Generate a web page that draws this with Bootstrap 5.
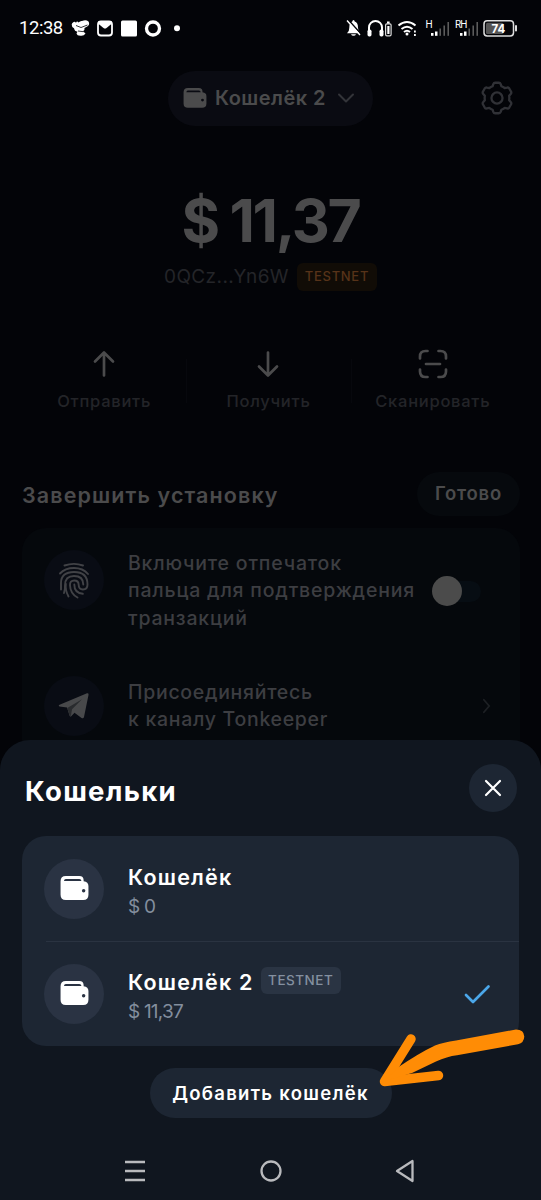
<!DOCTYPE html>
<html lang="ru">
<head>
<meta charset="utf-8">
<meta name="viewport" content="width=device-width, initial-scale=1">
<title>Кошельки</title>
<link href="https://cdn.jsdelivr.net/npm/bootstrap@5.3.0/dist/css/bootstrap.min.css" rel="stylesheet">
<style>
  body { background:#030408; font-family:Inter,"Open Sans",sans-serif; color:#fff; }
  .phone { width:541px; height:1200px; }
  .phone svg { display:block; flex-shrink:0; }
  .statusbar { height:56px; padding:0 23px 0 19px; }
  .clock { font:400 18.5px/56px Roboto,sans-serif; width:46px; letter-spacing:-.45px; }

  .dimmed { color:#4b4b4c; }
  .topbar { height:56px; margin-top:14px; padding:0 26px 0 168px; }
  .wallet-pill { width:205px; height:55px; padding:0 18px 0 15px; background:#0a0b12; font-weight:600; font-size:20px; letter-spacing:.46px; }
  .balance { height:70px; margin-top:60px; font-weight:700; font-size:59px; line-height:70px; white-space:nowrap; }
  .balance .sign { width:48px; font-size:59px; }
  .balance .sum { letter-spacing:-2.3px; }
  .address { height:28px; margin-top:7px; font-size:19px; letter-spacing:.4px; color:#242529; }
  .tag { border-radius:6px; font-weight:500; display:flex; align-items:center; justify-content:center; }
  .tag-dim { width:80px; height:28px; background:#110c06; color:#573319; font-size:13px; letter-spacing:.7px; }
  .actions { height:92px; margin:44px 26px 0 22px; font-size:16.5px; font-weight:500; letter-spacing:.74px; color:#232428; }
  .actions .act { padding-top:14px; gap:11px; line-height:22px; }
  .actions .act + .act::before { content:""; position:absolute; left:0; top:24px; height:44px; border-left:1px solid #07080d; }

  .setup-head { height:44px; margin:45px 21px 0 22px; }
  .setup-head h2 { font-size:21.5px; font-weight:600; letter-spacing:1.1px; margin:3px 0 0; }
  .done { width:103px; height:44px; background:#06090d; font-weight:600; font-size:18.5px; letter-spacing:.75px; }
  .setup { height:240px; margin:12px 21px 0 22px; padding:22px 29px 0 22px; background:#05080c; border-radius:24px; }
  .setup p { font-size:19.5px; line-height:27.4px; font-weight:500; margin:0; white-space:nowrap; color:#3d3e42; }
  .setup .step + .step { margin-top:44px; }
  .round { width:60px; height:60px; border-radius:50%; flex-shrink:0; display:flex; align-items:center; justify-content:center; }
  .setup .round { background:#090c14; }
  .switcher { width:49px; height:30px; margin-right:10px; }
  .switcher span { width:35px; height:21px; border-radius:11px; background:#070d13; margin-left:14px; }
  .switcher i { width:30px; height:30px; border-radius:50%; background:#4b4b4b; left:0; top:0; }

  .sheet { height:460px; background:#10161f; border-radius:30px 30px 0 0; padding:0 22px; }
  .sheet-head { height:96px; padding:0 2px 0 3px; }
  .sheet-head h1 { font-size:27.5px; font-weight:700; letter-spacing:1.3px; margin:6px 0 0; }
  .close-round { width:48px; height:48px; background:#1d2633; border:0; }
  .wallets { background:#1d2633; border-radius:24px; height:210px; }
  .wallets .wallet { height:105px; padding:0 28px 0 22px; gap:24px; }
  .wallets .wallet + .wallet::before { content:""; position:absolute; left:24px; right:0; top:0; border-top:1px solid #2a3341; }
  .wallets .round { background:#2a3343; }
  .wname { font-weight:600; font-size:21.5px; line-height:28px; letter-spacing:1.2px; white-space:nowrap; margin-top:5px; }
  .wsum { font-size:19px; line-height:26px; color:#838e9e; margin-top:3px; letter-spacing:-.8px; }
  .tag-grey { width:80px; height:27px; background:#2a3443; color:#8490a0; font-size:13.5px; letter-spacing:.5px; margin:-3px 0 0 7px; }
  .add { width:242px; height:50px; margin-top:22px; background:#1d2633; color:#fff; font-weight:600; font-size:18.5px; letter-spacing:1.3px; white-space:nowrap; border:0; padding:2px 0 0; }
  .navbar-keys { height:54px; margin-top:24px; padding:4px 104px 0 102px; }
  .pointer-arrow { left:370px; top:1020px; pointer-events:none; }
</style>
</head>
<body>
<svg width="0" height="0" class="position-absolute">
  <symbol id="wallet" viewBox="0 0 30 26">
    <path d="M6 0H20Q24.500 0 24.500 4.500V5.500Q29.500 6 29.500 10.500V19.500Q29.500 25 24 25H6Q.5 25 .5 19.500V5.500Q.5 0 6 0Z" fill="currentColor"/>
    <path d="M4 5.300Q4.200 3.200 6 3.200H20Q22 3.200 22.200 5.300Z" fill="var(--hole)"/>
    <circle cx="24.500" cy="15.300" r="1.800" fill="var(--hole)"/>
  </symbol>
</svg>
<div class="phone position-relative overflow-hidden d-flex flex-column">

  <header class="statusbar d-flex align-items-center">
    <span class="clock">12:38</span>
    <svg class="ms-1" width="124" height="24" viewBox="69 15 124 24" fill="#fff">
      <path d="M73 21.500q1.500-1.500 3 .3 1-2.500 2.500-.3 2-2 3.500-1.500 4-1.500 6.500.5 1.500 2.500-.5 4.500l-3.500 2q.5 2.500-1.500 3.300l2.500 2.200q-1.500 2.500-4.500 2.300-4 .2-4.500-2.500l1-1.500q-3-.5-3.500-3.500-2.500-1.500-2.300-3.800.3-1.500 1.300-2Z"/>
      <path d="M76 24.500l5 2 6.500-2.500M78 30l5.500.7" stroke="#030408" fill="none" stroke-width=".8"/>
      <rect x="98" y="20.500" width="14" height="14" rx="3" fill="none" stroke="#fff" stroke-width="1.800"/><path d="M98 20.500h14v2l-5.500 4.500q-1.500 1-3 0l-5.500-4.500Z"/>
      <rect x="121" y="19.500" width="16" height="16" rx="1.500"/>
      <circle cx="153" cy="27.500" r="6.500" fill="none" stroke="#fff" stroke-width="3.300"/>
      <circle cx="177" cy="27.200" r="3"/>
    </svg>
    <svg class="ms-auto" width="174" height="26" viewBox="344 14 174 26" fill="#fff">
      <path d="M347 32.200q2.300-1.500 2.300-5.500 0-5 3-6.100.2-1.500 1.200-1.500t1.200 1.500q3.300 1.100 3.300 6.100 0 4 2.300 5.500ZM351 33.200h5q-.6 1.600-2.500 1.600t-2.500-1.600Z"/>
      <path d="M348 18.500l13 14.500" stroke="#030408" stroke-width="1.600"/><path d="M347 19.500l13 14.500" stroke="#fff" stroke-width="1.400"/>
      <path d="M369 31v-4.500a6.500 6.500 0 0 1 13 0V31" fill="none" stroke="#fff" stroke-width="2"/><rect x="367.500" y="28.500" width="4" height="7" rx="1.700"/><rect x="379.500" y="28.500" width="4" height="7" rx="1.700"/>
      <rect x="385.600" y="22.800" width="5.500" height="12" rx="1.300" fill="none" stroke="#ddd" stroke-width="1.200"/><rect x="387.300" y="25" width="2.200" height="8"/><rect x="387" y="20.500" width="2.600" height="2"/>
      <g fill="none" stroke="#fff" stroke-width="2"><path d="M398.500 24.500q8.500-7 17 0"/><path d="M401.500 28q5.500-4.500 11 0"/><path d="M404 31q3-2.500 6 0"/></g><circle cx="407" cy="33" r="1.500"/><rect x="414" y="29.500" width="1.800" height="2"/><rect x="414" y="33" width="1.800" height="2"/>
      <g font-family="Roboto,sans-serif" font-size="10"><text x="425.500" y="27">H</text><text x="455" y="27" textLength="12.500">RH</text></g>
      <rect x="431" y="32" width="2.500" height="2.800"/><rect x="435" y="30.500" width="2.500" height="4.300"/><g fill="#666"><rect x="439.500" y="27.500" width="1.400" height="7.300"/><rect x="443.500" y="24.500" width="1.400" height="10.300"/><rect x="447.500" y="21" width="1.400" height="13.800"/></g>
      <rect x="460" y="32" width="2.500" height="2.800"/><rect x="464" y="30.500" width="2.500" height="4.300"/><g fill="#666"><rect x="468.500" y="27.500" width="1.400" height="7.300"/><rect x="472.500" y="24.500" width="1.400" height="10.300"/><rect x="476.500" y="21" width="1.400" height="13.800"/></g>
      <rect x="484" y="19.700" width="29.500" height="15.300" rx="3.200" fill="none" stroke="#ddd" stroke-width="1.500"/><rect x="486" y="21.700" width="17.500" height="11.300" rx="1.500" fill="#555"/><rect x="515" y="24" width="2" height="6.500" rx="1" fill="#ddd"/>
      <text x="498.500" y="31.600" text-anchor="middle" font-family="Inter,sans-serif" font-size="11.500" font-weight="700">74</text>
    </svg>
  </header>

  <main class="dimmed">
    <div class="topbar d-flex align-items-center justify-content-between">
      <div class="wallet-pill rounded-pill d-flex align-items-center">
        <svg width="24" height="20.500" style="--hole:#0a0b12"><use href="#wallet"/></svg>
        <span class="ms-2 text-nowrap">Кошелёк 2</span>
        <svg class="ms-auto" width="18" height="12" viewBox="0 0 18 12" fill="none" stroke="#333439" stroke-width="2" stroke-linecap="round" stroke-linejoin="round"><path d="M2 2.500l7 7 7-7"/></svg>
      </div>
      <svg width="36" height="36" viewBox="-19.500 -19 39 38" fill="none" stroke="#303136" stroke-width="2.500" stroke-linejoin="round">
        <path d="M-2-16.500h4q1.500 0 2 1.500l.8 2.300q1.800.7 3.500 1.900l2.500-.5q1.600-.4 2.500 1l1.800 3.200q.9 1.500-.2 2.700l-1.700 2q.3 2.400 0 4.800l1.700 2q1.100 1.200.2 2.700l-1.800 3.200q-.9 1.400-2.500 1l-2.500-.5q-1.700 1.200-3.500 1.900L4 15q-.5 1.500-2 1.500h-4q-1.500 0-2-1.500l-.8-2.300q-1.800-.7-3.500-1.900l-2.500.5q-1.600.4-2.500-1l-1.800-3.200q-.9-1.500.2-2.700l1.700-2q-.3-2.400 0-4.800l-1.700-2q-1.100-1.200-.2-2.700l1.800-3.200q.9-1.400 2.500-1l2.500.5q1.700-1.200 3.500-1.900L-4-15q.5-1.500 2-1.500Z"/><circle r="6"/>
      </svg>
    </div>

    <div class="balance d-flex justify-content-center"><span class="sign">$</span><span class="sum">11,37</span></div>
    <div class="address d-flex align-items-center justify-content-center"><span>0QCz...Yn6W</span><span class="tag tag-dim ms-2">TESTNET</span></div>

    <div class="actions row g-0 text-center">
      <div class="act col position-relative d-flex flex-column align-items-center">
        <svg width="30" height="30" viewBox="0 0 30 30" fill="none" stroke="#4b4b4c" stroke-width="2.700" stroke-linecap="round" stroke-linejoin="round"><path d="M15 26.500V4M6 12.500L15 3.500l9 9"/></svg>Отправить</div>
      <div class="act col position-relative d-flex flex-column align-items-center">
        <svg width="30" height="30" viewBox="0 0 30 30" fill="none" stroke="#4b4b4c" stroke-width="2.700" stroke-linecap="round" stroke-linejoin="round"><path d="M15 3.500v22.500M6 17.500l9 9 9-9"/></svg>Получить</div>
      <div class="act col position-relative d-flex flex-column align-items-center">
        <svg width="30" height="30" viewBox="0 0 30 30" fill="none" stroke="#4b4b4c" stroke-width="2.700" stroke-linecap="round"><path d="M2 9.500V7.500Q2 2 7.500 2h2M20.500 2h2Q28 2 28 7.500v2M28 20.500v2Q28 28 22.500 28h-2M9.500 28h-2Q2 28 2 22.500v-2M8 15h14"/></svg>Сканировать</div>
    </div>

    <div class="setup-head d-flex align-items-center justify-content-between">
      <h2>Завершить установку</h2><span class="done rounded-pill d-flex align-items-center justify-content-center">Готово</span>
    </div>
    <section class="setup">
      <div class="step d-flex">
        <span class="round"><svg width="30" height="37" viewBox="0 0 30 37" fill="none" stroke="#414246" stroke-width="1.900" stroke-linecap="round">
          <path d="M5.500 3.500Q15 .2 24 3.500M1 11.500Q6 6 15 6t14 6"/>
          <path d="M2 27.500V21Q2 10 15 10q13.500 0 13.500 12.500 0 5-4.500 5-4.300 0-4.300-4.500 0-4.500-4.500-4.500-4.400 0-4.200 4.800.3 8.500 7.500 12.200"/>
          <path d="M5 31Q6.200 28 6 23.500q0-9.500 9-9.500 9.300 0 9.300 8.500"/>
          <path d="M9.500 34.500Q6 28 6.800 22M15.300 22.500q0 8.500 8.500 9.300"/>
        </svg></span>
        <p class="ms-4" style="letter-spacing:.8px">Включите отпечаток<br>пальца для подтверждения<br>транзакций</p>
        <div class="switcher position-relative d-flex align-items-center flex-shrink-0 ms-auto my-auto"><span></span><i class="position-absolute"></i></div>
      </div>
      <div class="step d-flex align-items-center">
        <span class="round"><svg width="32" height="28" viewBox="0 0 32 28"><path d="M1 13L29 1.300q2-.6 1.500 1.700l-4.500 22q-.6 2.200-2.800.8l-6.700-5-3.300 3.400q-1.200 1-1.700-.8L9 15.500 1.500 14.500q-1.200-.8-.5-1.500Z" fill="#48494b"/><path d="M9.300 16L24 7.200 14 17.200l-1 6.400q-1 .8-1.500-.6Z" fill="#292b2e"/></svg></span>
        <p class="ms-4" style="letter-spacing:.7px">Присоединяйтесь<br>к каналу Tonkeeper</p>
        <svg class="ms-auto" width="9" height="16" viewBox="0 0 10 18" fill="none" stroke="#1d2024" stroke-width="2" stroke-linecap="round"><path d="M2 2l6 7-6 7"/></svg>
      </div>
    </section>
  </main>

  <section class="sheet position-absolute bottom-0 start-0 w-100">
    <div class="sheet-head d-flex align-items-center justify-content-between">
      <h1>Кошельки</h1>
      <button class="close-round rounded-circle d-flex align-items-center justify-content-center p-0" aria-label="Закрыть"><svg width="18" height="18" viewBox="0 0 18 18" stroke="#fff" stroke-width="2.200" stroke-linecap="round"><path d="M2 2l14 14M16 2L2 16"/></svg></button>
    </div>
    <div class="wallets">
      <div class="wallet position-relative d-flex align-items-center">
        <span class="round"><svg width="29" height="25" style="--hole:#2a3343"><use href="#wallet"/></svg></span>
        <div><div class="wname">Кошелёк</div><div class="wsum">$ 0</div></div>
      </div>
      <div class="wallet position-relative d-flex align-items-center">
        <span class="round"><svg width="29" height="25" style="--hole:#2a3343"><use href="#wallet"/></svg></span>
        <div><div class="wname d-flex align-items-center">Кошелёк 2<span class="tag tag-grey">TESTNET</span></div><div class="wsum">$ 11,37</div></div>
        <svg class="ms-auto" width="28" height="22" viewBox="0 0 28 22" fill="none" stroke="#4ba7ea" stroke-width="2.700" stroke-linecap="round" stroke-linejoin="round"><path d="M3 12l7 7L25.500 3.500"/></svg>
      </div>
    </div>
    <button class="add rounded-pill d-block mx-auto text-center">Добавить кошелёк</button>
    <div class="navbar-keys d-flex align-items-center justify-content-between">
      <svg width="22" height="22" viewBox="0 0 22 22" stroke="#b9babd" stroke-width="2.400"><path d="M1 2h20M1 11h20M1 20h20"/></svg>
      <svg width="22" height="22" viewBox="0 0 22 22" fill="none" stroke="#b9babd" stroke-width="2.300"><circle cx="11" cy="11" r="9.500"/></svg>
      <svg width="20" height="24" viewBox="0 0 20 24" fill="none" stroke="#b9babd" stroke-width="2.300" stroke-linejoin="round"><path d="M17.500 2v20L2 12Z"/></svg>
    </div>
  </section>

  <svg class="pointer-arrow position-absolute" width="165" height="75" viewBox="370 1020 165 75" fill="#ff8c05">
    <path d="M411 1039L384.500 1081.500 438.500 1075.500" fill="none" stroke="#ff8c05" stroke-width="9.500" stroke-linecap="round" stroke-linejoin="round"/>
    <path d="M516 1029.500Q524 1029.500 524.300 1036.500 524 1043 518 1044.300L457 1055.300Q447 1056.500 436 1061.500L412 1073 385 1081 397 1068Q420 1052.500 435 1045.500 443 1042.500 456 1040.500Z"/>
  </svg>
</div>
<script src="https://cdn.jsdelivr.net/npm/bootstrap@5.3.0/dist/js/bootstrap.bundle.min.js"></script>
</body>
</html>
